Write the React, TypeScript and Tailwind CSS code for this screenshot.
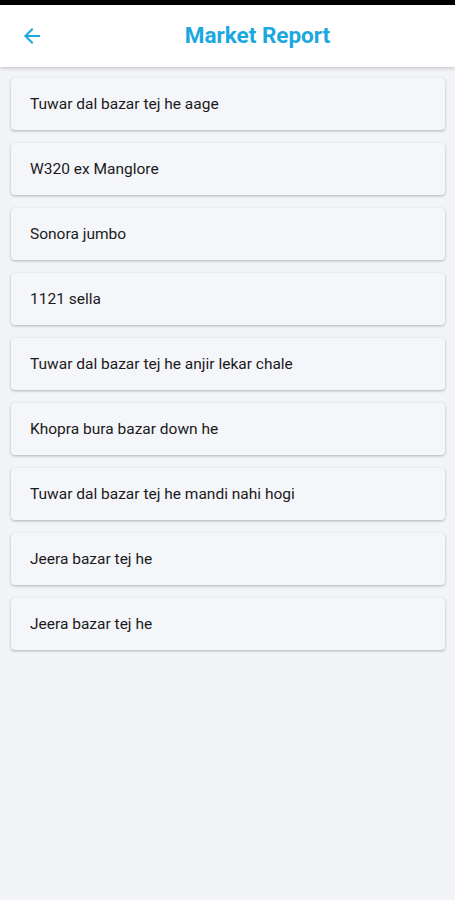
import React from "react";

const items = [
  "Tuwar dal bazar tej he aage",
  "W320 ex Manglore",
  "Sonora jumbo",
  "1121 sella",
  "Tuwar dal bazar tej he anjir lekar chale",
  "Khopra bura bazar down he",
  "Tuwar dal bazar tej he mandi nahi hogi",
  "Jeera bazar tej he",
  "Jeera bazar tej he",
];

export default function App() {
  return (
    <div className="w-[455px] h-[900px] bg-[#f3f4f8] flex flex-col" style={{ fontFamily: "Roboto, 'Noto Sans', sans-serif" }}>
      <div className="h-[5px] bg-black" />
      <div className="h-[62px] bg-white flex items-center relative shadow-[0_2px_3px_rgba(0,0,0,0.15)] z-10">
        <div className="w-[64px] flex items-center justify-center">
          <svg width="24" height="24" viewBox="0 0 24 24">
            <path d="M20 11H7.83l5.59-5.59L12 4l-8 8 8 8 1.41-1.41L7.83 13H20v-2z" fill="#1ba8e0" />
          </svg>
        </div>
        <div className="absolute left-0 right-0 top-0 bottom-0 flex items-center justify-center pointer-events-none">
          <span className="text-[22.5px] font-bold text-[#1ba8e0] ml-[60px]">Market Report</span>
        </div>
      </div>
      <div className="flex flex-col gap-[13px] pl-[11px] pr-[10px] pt-[11px]">
        {items.map((t, i) => (
          <div
            key={i}
            className="h-[52px] bg-[#f5f6fa] rounded-[4px] shadow-[0_1px_3px_rgba(0,0,0,0.28)] flex items-center pl-[19px] pt-[2px] text-[15.5px] text-[#1a1a1a]"
          >
            {t}
          </div>
        ))}
      </div>
    </div>
  );
}
